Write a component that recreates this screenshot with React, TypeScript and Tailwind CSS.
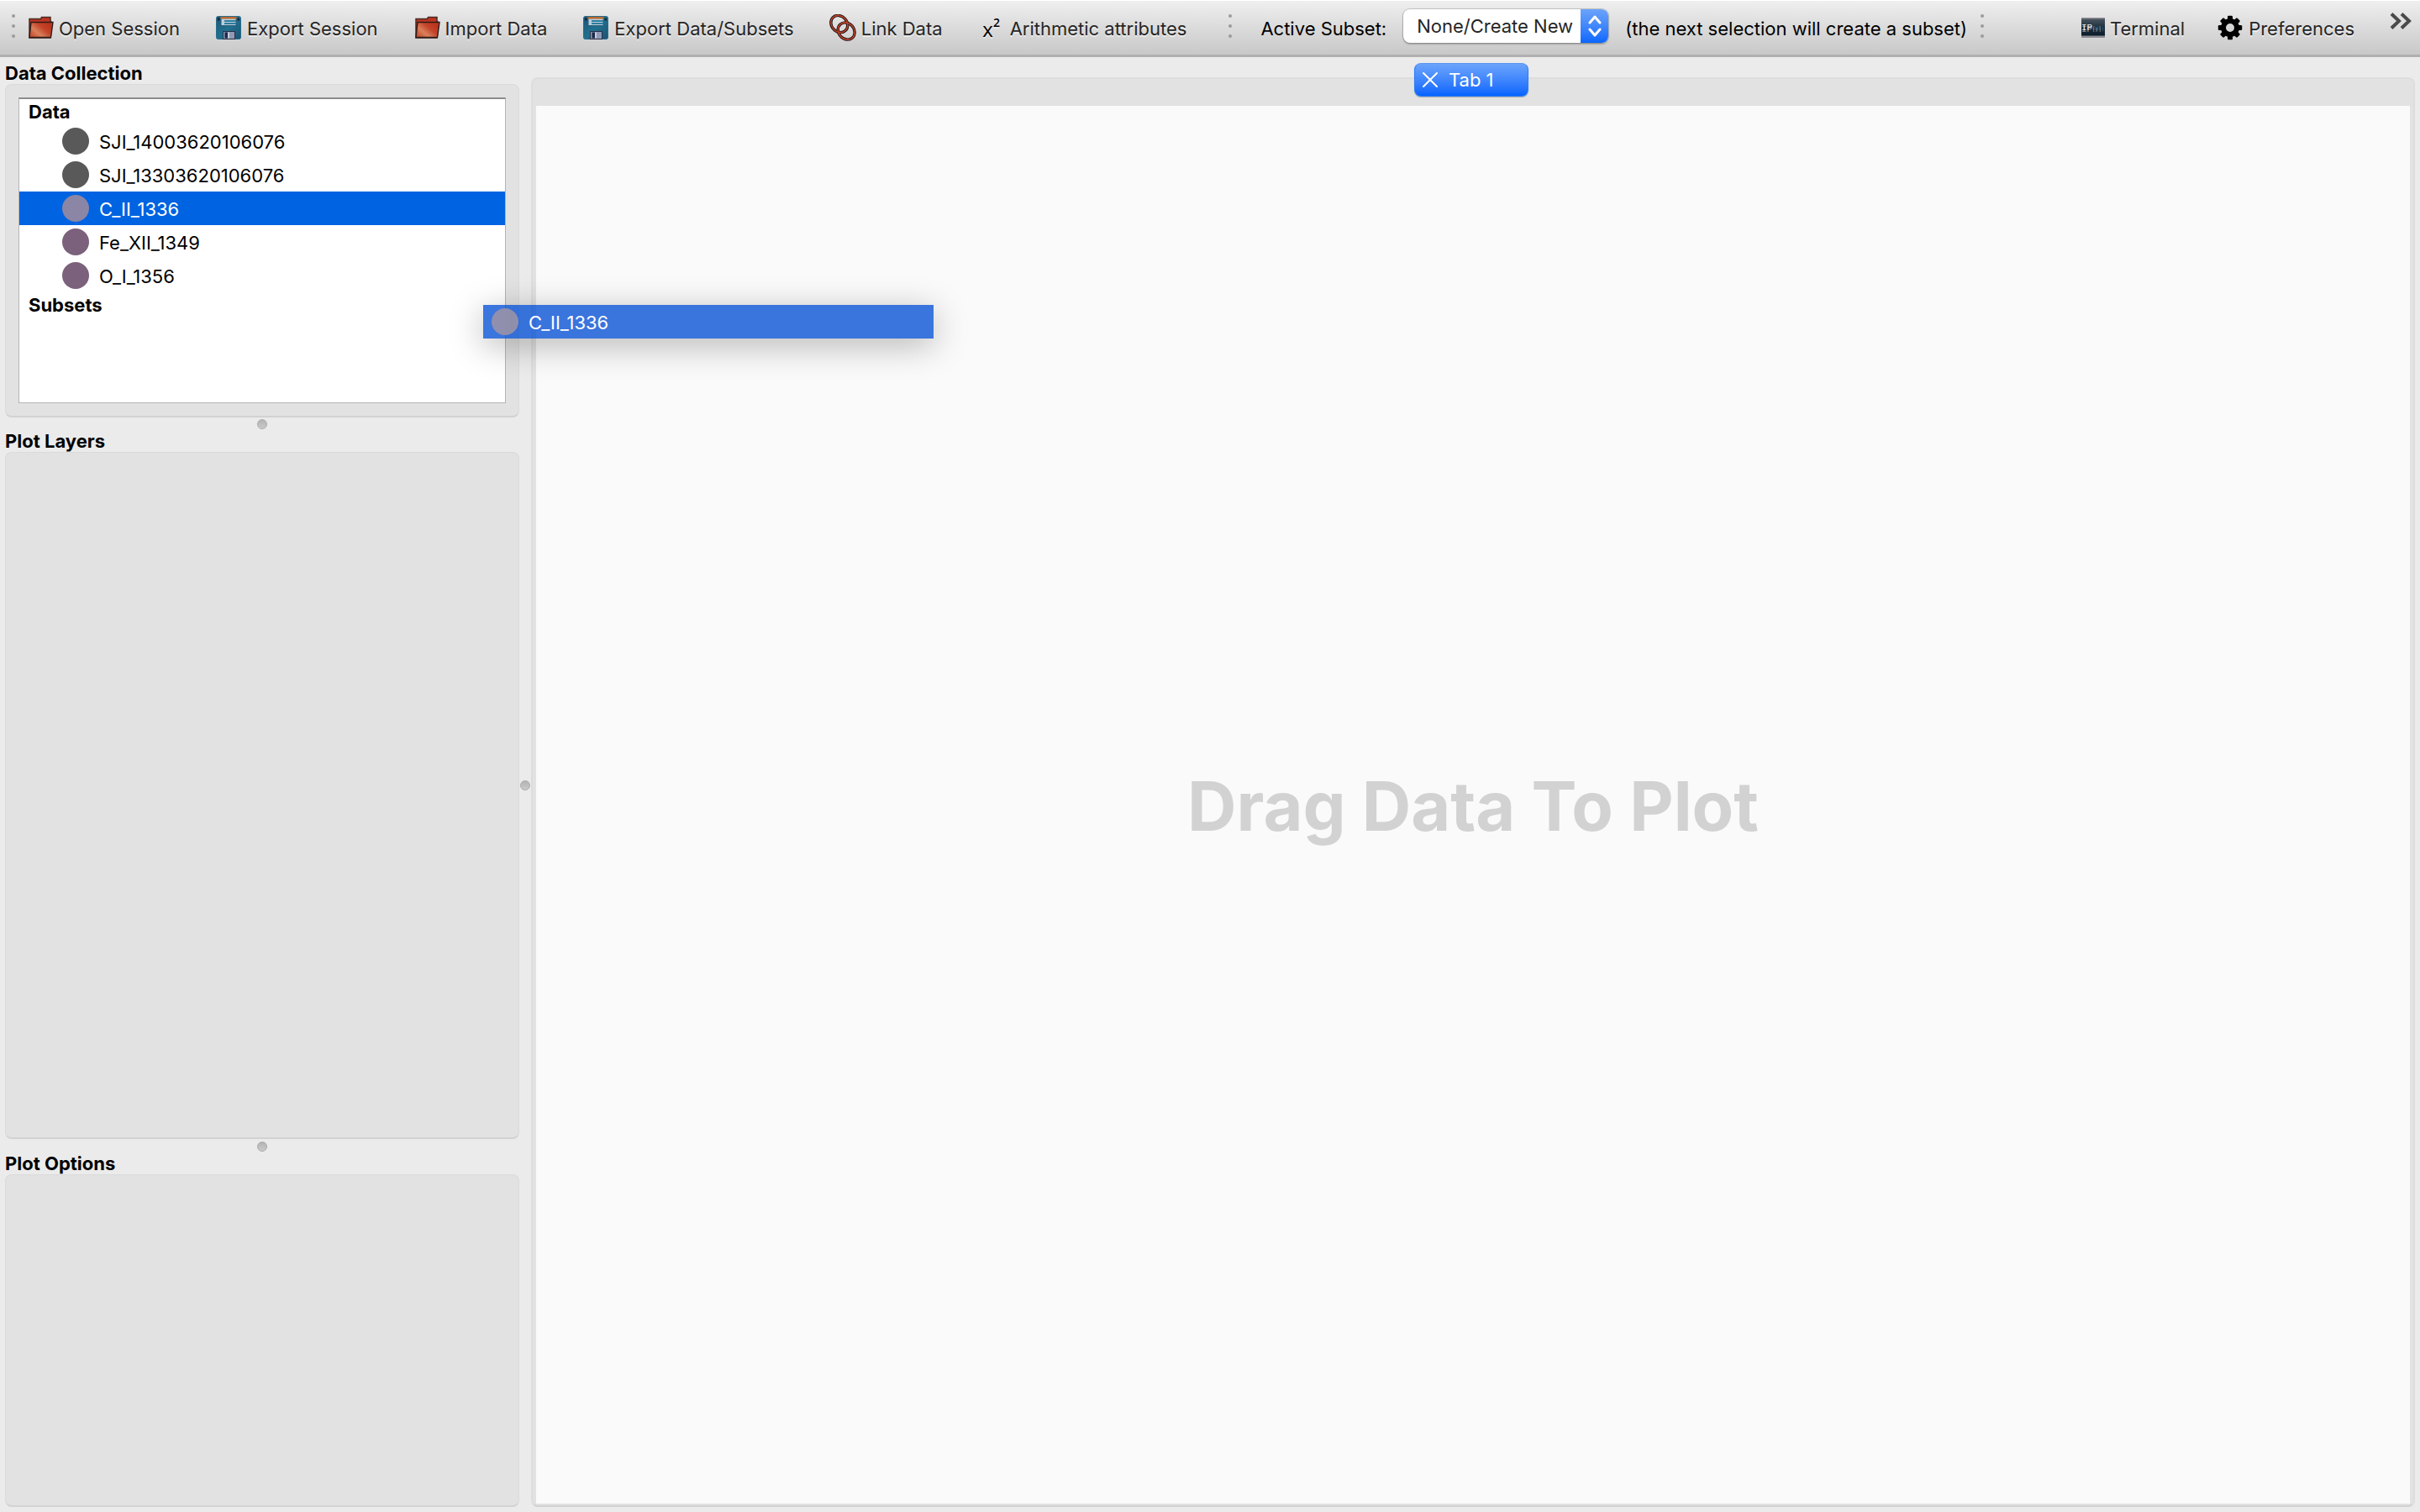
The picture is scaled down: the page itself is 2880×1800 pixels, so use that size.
import React from "react";

function FolderIcon() {
  return (
    <svg viewBox="0 0 32 32" className="size-8 shrink-0" aria-hidden="true">
      <defs>
        <linearGradient id="folder" x1="0" y1="0.8" x2="0.8" y2="0.2">
          <stop offset="0" stopColor="#c8502e" />
          <stop offset="0.35" stopColor="#d9805c" />
          <stop offset="0.7" stopColor="#c4452a" />
          <stop offset="1" stopColor="#bb3720" />
        </linearGradient>
      </defs>
      <path d="M3 28V5.500H16.500L17.500 3.500H28V8L30 10L28 28Z" fill="#bd3420" stroke="#4a2a22" strokeWidth="1.500" />
      <path d="M5 9.500H31L28.500 27.500H3Z" fill="url(#folder)" stroke="#2e1c18" strokeWidth="1.400" />
    </svg>
  );
}

function FloppyIcon() {
  return (
    <svg viewBox="0 0 32 32" className="size-8 shrink-0" aria-hidden="true">
      <defs>
        <linearGradient id="floppy" x1="0" y1="0" x2="1" y2="1">
          <stop offset="0" stopColor="#1d5577" />
          <stop offset="0.5" stopColor="#20708f" />
          <stop offset="1" stopColor="#1b5272" />
        </linearGradient>
      </defs>
      <rect x="1.500" y="2.500" width="29" height="27" rx="2" fill="url(#floppy)" stroke="#2a6c8c" />
      <rect x="3" y="4.500" width="2.500" height="3" fill="#14243a" />
      <rect x="26.500" y="4.500" width="2.500" height="3" fill="#14243a" />
      <rect x="7" y="4.500" width="18" height="9" fill="#b9cfde" stroke="#2c5b76" />
      <rect x="6.500" y="3" width="19" height="2.500" fill="#b8692f" />
      <rect x="11" y="7" width="14" height="2" fill="#2f7d9d" />
      <rect x="11" y="10" width="14" height="2" fill="#2f7d9d" />
      <rect x="9.500" y="20.500" width="14" height="9" fill="#8f9ab5" stroke="#2b3148" />
      <rect x="11.500" y="21.500" width="3.500" height="7" fill="#1c2949" />
      <rect x="15" y="21.500" width="2" height="7" fill="#c9cede" />
    </svg>
  );
}

function LinkIcon() {
  return (
    <svg viewBox="0 0 32 32" className="size-8 shrink-0" aria-hidden="true" fill="none">
      <g stroke="#1f1411" strokeWidth="3.400">
        <ellipse cx="11.800" cy="11.500" rx="9.200" ry="10.800" transform="rotate(-42 11.800 11.500)" />
        <ellipse cx="20.200" cy="20" rx="9.200" ry="10.800" transform="rotate(-42 20.200 20)" />
      </g>
      <g stroke="#c0432c" strokeWidth="1.500">
        <ellipse cx="11.800" cy="11.500" rx="9.200" ry="10.800" transform="rotate(-42 11.800 11.500)" />
        <ellipse cx="20.200" cy="20" rx="9.200" ry="10.800" transform="rotate(-42 20.200 20)" />
      </g>
    </svg>
  );
}

function SquareIcon() {
  return (
    <span className="flex w-8 shrink-0 items-center justify-center pt-1 font-['Open_Sans',sans-serif] text-2xl leading-8 text-black" aria-hidden="true">
      x<sup className="-top-2 text-sm font-semibold">2</sup>
    </span>
  );
}

function TerminalIcon() {
  return (
    <svg viewBox="0 0 28 24" className="h-6 w-7 shrink-0" aria-hidden="true">
      <defs>
        <linearGradient id="term" x1="0" y1="0" x2="0" y2="1">
          <stop offset="0" stopColor="#4a565f" />
          <stop offset="0.5" stopColor="#1c2f3e" />
          <stop offset="1" stopColor="#0a1c2b" />
        </linearGradient>
      </defs>
      <rect width="28" height="24" fill="#8e8c94" />
      <rect y="1.500" width="28" height="20" fill="url(#term)" />
      <text x="0" y="15" fontFamily="Liberation Mono, monospace" fontSize="11" fill="#eef2f4">IP</text>
      <text x="13" y="14" fontFamily="Liberation Mono, monospace" fontSize="6" fill="#4f9bcb">[y]:</text>
    </svg>
  );
}

function GearIcon() {
  return (
    <svg viewBox="0 0 32 32" className="size-8 shrink-0" aria-hidden="true">
      <g fill="#000">
        {[0, 45, 90, 135].map((a) => (
          <rect key={a} x="13" y="1.800" width="6" height="28.400" rx="1.200" transform={`rotate(${a} 16 16)`} />
        ))}
      </g>
      <circle cx="16" cy="16" r="8" fill="#d6d6d6" stroke="#000" strokeWidth="6" />
    </svg>
  );
}

function Grip({ className }: { className: string }) {
  return (
    <div className={`flex h-7 shrink-0 flex-col justify-between ${className}`} aria-hidden="true">
      <i className="size-1 rounded-full bg-[#9b9b9b]" />
      <i className="size-1 rounded-full bg-[#9b9b9b]" />
      <i className="size-1 rounded-full bg-[#9b9b9b]" />
    </div>
  );
}

function ToolButton({ icon, label }: { icon: React.ReactNode; label: string }) {
  return (
    <button type="button" className="flex shrink-0 items-center gap-1.5 whitespace-nowrap text-[#262626] [text-shadow:0_2px_0_#ffffff80]">
      {icon}
      <span className="pt-0.5">{label}</span>
    </button>
  );
}

function Toolbar() {
  return (
    <header className="flex h-[68px] shrink-0 items-center border-t border-b-3 border-t-white border-b-[#b0b0b0] bg-linear-to-b from-[#efefef] to-[#c8c8c8] pl-3.5">
      <Grip className="mr-3.5 mb-1" />
      <div className="flex gap-[42px]">
        <ToolButton icon={<FolderIcon />} label="Open Session" />
        <ToolButton icon={<FloppyIcon />} label="Export Session" />
        <ToolButton icon={<FolderIcon />} label="Import Data" />
        <ToolButton icon={<FloppyIcon />} label="Export Data/Subsets" />
        <ToolButton icon={<LinkIcon />} label="Link Data" />
        <ToolButton icon={<SquareIcon />} label="Arithmetic attributes" />
      </div>
      <Grip className="mr-[34px] mb-1 ml-[50px]" />
      <label htmlFor="subset" className="mr-5 shrink-0 whitespace-nowrap pt-0.5">
        Active Subset:
      </label>
      <div className="relative mb-1 h-10 w-[244px] shrink-0 overflow-hidden rounded-lg bg-white shadow-[0_0_1px_1px_#00000030,0_2px_2px_#00000030]">
        <select id="subset" className="size-full appearance-none pl-4 text-[#262626] outline-none">
          <option>None/Create New</option>
        </select>
        <span className="pointer-events-none absolute inset-y-0 right-0 flex w-[33px] items-center justify-center bg-linear-to-b from-[#6ba3fb] to-[#0667fd]">
          <svg viewBox="0 0 16 26" className="h-[26px] w-4" fill="none" stroke="#fff" strokeWidth="3" strokeLinecap="round" strokeLinejoin="round">
            <path d="M2 9L8 2L14 9M2 17L8 24L14 17" />
          </svg>
        </span>
      </div>
      <span className="ml-5 shrink-0 whitespace-nowrap pt-0.5">(the next selection will create a subset)</span>
      <Grip className="mb-1 ml-4" />
      <div className="ml-auto flex items-center gap-[38px]">
        <ToolButton icon={<TerminalIcon />} label="Terminal" />
        <ToolButton icon={<GearIcon />} label="Preferences" />
        <button type="button" aria-label="More" className="mr-2 mb-4 ml-1">
          <svg viewBox="0 0 28 20" className="h-5 w-7" fill="none" stroke="#4a4a4a" strokeWidth="4">
            <path d="M2 1.500L11 10L2 18.500M14 1.500L23 10L14 18.500" />
          </svg>
        </button>
      </div>
    </header>
  );
}

function SplitHandle() {
  return <span className="size-3 rounded-full border border-[#acacac] bg-linear-to-b from-[#b4b4b4] to-[#cacaca]" />;
}

function Panel({ title, className, children }: { title: string; className: string; children?: React.ReactNode }) {
  return (
    <section className={`flex flex-col ${className}`}>
      <h2 className="pb-0.5 leading-[22px] font-bold">{title}</h2>
      <div className="flex-1 rounded-lg border border-b-2 border-[#dadada] border-b-[#d2d2d2] bg-[#e2e2e2] p-[15px]">{children}</div>
    </section>
  );
}

const datasets = [
  { name: "SJI_14003620106076", row: "", dot: "bg-[#595959]" },
  { name: "SJI_13303620106076", row: "", dot: "bg-[#595959]" },
  { name: "C_II_1336", row: "bg-[#0063e1] text-white", dot: "bg-[#8b86a5]" },
  { name: "Fe_XII_1349", row: "", dot: "bg-[#7b617b]" },
  { name: "O_I_1356", row: "", dot: "bg-[#7b617b]" },
];

function Sidebar() {
  return (
    <aside className="flex w-[612px] shrink-0 flex-col">
      <Panel title="Data Collection" className="h-[420px] shrink-0">
        <div className="h-[364px] border border-t-2 border-[#b4b4b4] border-t-[#8c8c8c] bg-white">
          <h3 className="pl-[11px] leading-[30px] font-bold">Data</h3>
          <ul>
            {datasets.map((d) => (
              <li key={d.name} className={`flex h-10 items-center gap-3 pl-[51px] ${d.row}`}>
                <span className={`size-8 rounded-full ${d.dot}`} />
                <span className="pt-0.5">{d.name}</span>
              </li>
            ))}
          </ul>
          <h3 className="pl-[11px] leading-[30px] font-bold">Subsets</h3>
        </div>
      </Panel>
      <div className="flex h-[18px] shrink-0 items-center justify-center">
        <SplitHandle />
      </div>
      <Panel title="Plot Layers" className="flex-[841_1_0%]" />
      <div className="flex h-[18px] shrink-0 items-center justify-center">
        <SplitHandle />
      </div>
      <Panel title="Plot Options" className="flex-[420_1_0%]" />
    </aside>
  );
}

function Canvas() {
  return (
    <main className="mt-4 flex min-w-0 flex-1 flex-col rounded-lg border-2 border-[#dddddd] border-b-[#d2d2d2] bg-[#e2e2e2] px-1 pb-0.5">
      <div className="flex h-8 shrink-0 justify-center pr-1" role="tablist">
        <div className="-mt-[19px] flex h-10 w-[136px] items-center gap-3 rounded-lg border border-[#2f7df5] border-t-[#5b96ef] bg-linear-to-b from-[#6ba3fb] to-[#0264fe] pl-2 text-white shadow-[0_1px_1px_#00000040]">
          <button type="button" aria-label="Close tab">
            <svg viewBox="0 0 20 20" className="size-5" stroke="#fff" strokeWidth="2" strokeLinecap="round">
              <path d="M2 2L18 18M18 2L2 18" />
            </svg>
          </button>
          <button type="button" role="tab" aria-selected="true">
            Tab 1
          </button>
        </div>
      </div>
      <div className="flex flex-1 items-center justify-center bg-[#fafafa] pt-1">
        <p className="text-[81px] font-bold text-[#d2d2d2]">Drag Data To Plot</p>
      </div>
    </main>
  );
}

export default function App() {
  return (
    <div className="relative flex h-screen flex-col overflow-hidden bg-[#ebebeb] font-['Inter',sans-serif] text-[22px] leading-7 text-black">
      <Toolbar />
      <div className="flex min-h-0 flex-1 px-1.5 pt-2 pb-1.5">
        <Sidebar />
        <div className="flex w-3.5 shrink-0 items-center justify-center">
          <SplitHandle />
        </div>
        <Canvas />
      </div>
      <div className="absolute top-[363px] left-[575px] flex h-10 w-[536px] items-center gap-3 bg-[#004cd4]/77 pl-2.5 text-white shadow-[0_8px_40px_#00000047]">
        <span className="size-8 rounded-full bg-[#9590aa]/95" />
        <span className="pt-0.5">C_II_1336</span>
      </div>
    </div>
  );
}
